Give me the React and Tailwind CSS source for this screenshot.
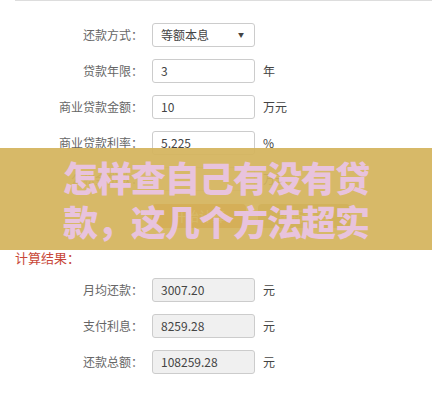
import React from 'react';

const font = { fontFamily: '"Noto Sans CJK SC", "Liberation Sans", sans-serif' };

const Row = ({ label, value, unit, readOnly, select }) => (
  <div className="flex items-center h-[23px]">
    <span className="w-[145px] text-right text-[12px] text-[#666] pr-[2px]">{label}</span>
    <div
      className={`ml-[7px] w-[103px] h-[24px] border border-[#ccc] rounded-[3px] flex items-center px-[8px] text-[12px] text-[#444] ${
        readOnly ? 'bg-[#f0f0f0]' : 'bg-white'
      }`}
    >
      <span className="flex-1">{value}</span>
      {select && <span className="text-[6px] text-[#444] mr-[2px]">▼</span>}
    </div>
    {unit && <span className="ml-[8px] text-[12px] text-[#444]">{unit}</span>}
  </div>
);

export default function App() {
  return (
    <div className="relative w-[432px] h-[400px] bg-white overflow-hidden" style={font}>
      <div className="ml-[15px] border-t border-[#ddd]" />

      <div className="flex flex-col gap-[13px] pt-[22px]">
        <Row label="还款方式：" value="等额本息" select />
        <Row label="贷款年限：" value="3" unit="年" />
        <Row label="商业贷款金额：" value="10" unit="万元" />
        <Row label="商业贷款利率：" value="5.225" unit="%" />
        <Row label="公积金贷款：" value="" unit="万元" />
      </div>

      <div className="flex gap-[12px] ml-[152px] mt-[14px]">
        <div className="w-[94px] h-[24px] rounded-[4px] bg-[#d9741c] text-white text-[13px] flex items-center justify-center">
          开始计算
        </div>
        <div className="w-[92px] h-[24px] rounded-[4px] bg-[#b79a4c] text-white text-[13px] flex items-center justify-center">
          重新计算
        </div>
      </div>

      <div className="ml-[15px] mt-[20px] text-[13px] text-[#c8483a]">计算结果：</div>

      <div className="flex flex-col gap-[13px] mt-[11px]">
        <Row label="月均还款：" value="3007.20" unit="元" readOnly />
        <Row label="支付利息：" value="8259.28" unit="元" readOnly />
        <Row label="还款总额：" value="108259.28" unit="元" readOnly />
      </div>

      <div className="absolute left-0 right-0 top-[148px] h-[102px] bg-[#d4b45c]/[0.93] flex flex-col items-center justify-center">
        <div className="text-[35px] font-black leading-[44px] text-[#e8c3dd] tracking-[-1px] text-center">
          怎样查自己有没有贷
          <br />
          款，这几个方法超实
        </div>
      </div>
    </div>
  );
}
